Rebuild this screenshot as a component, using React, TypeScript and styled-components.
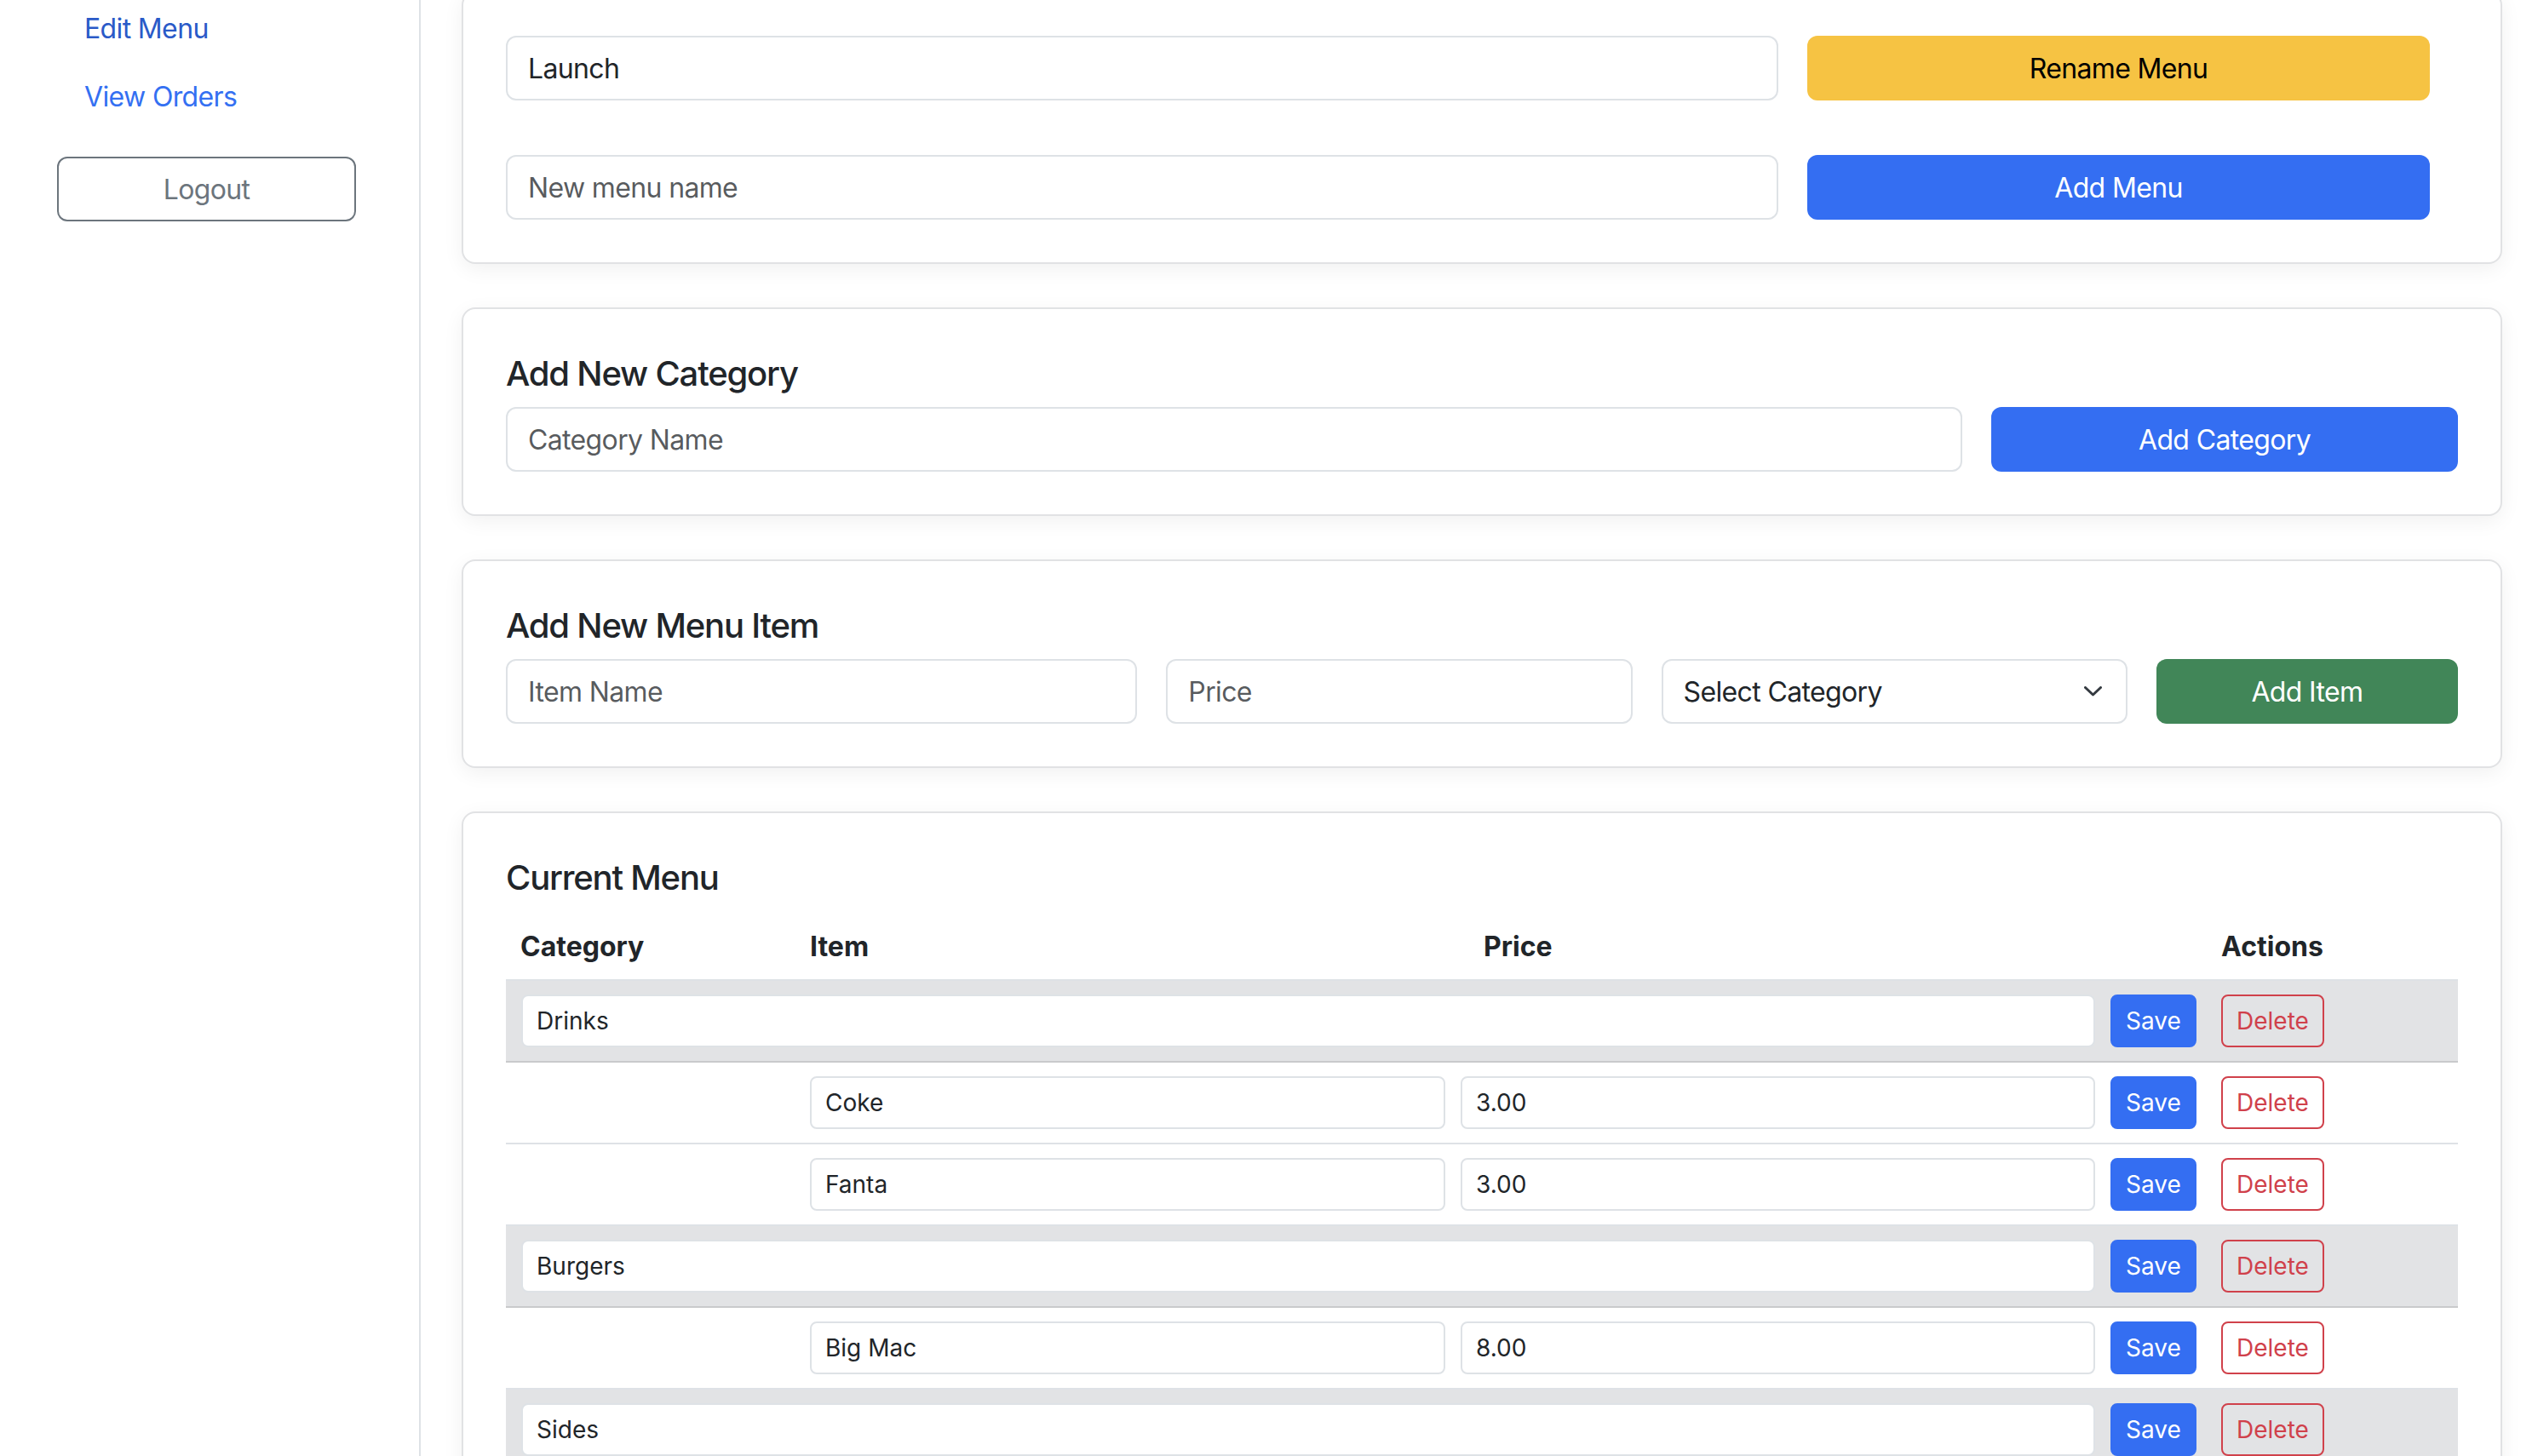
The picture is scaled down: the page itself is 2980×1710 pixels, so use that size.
import React from 'react'
import styled, { createGlobalStyle } from 'styled-components'

// body text at 32px runs a little wide in Inter, pull it in
const bodyTracking = '-0.02em'

const GlobalStyle = createGlobalStyle`
  * {
    box-sizing: border-box;
  }
  body {
    margin: 0;
    background: #ffffff;
    color: #212529;
    font-family: Inter, "Noto Sans", "Liberation Sans", sans-serif;
    font-size: 32px;
    line-height: 1.5;
    overflow: hidden;
  }
`

const Page = styled.div`
  display: flex;
  min-height: 100vh;
  margin-top: -10px;
`

const Sidebar = styled.aside`
  width: 494px;
  flex-shrink: 0;
  border-right: 2px solid #dee2e6;
  padding: 4px 0 0 67px;
  display: flex;
  flex-direction: column;
  align-items: flex-start;
`

const NavList = styled.nav`
  display: flex;
  flex-direction: column;
`

const NavLink = styled.a<{ $active?: boolean }>`
  display: block;
  padding: 16px 32px;
  font-size: 32px;
  line-height: 48px;
  letter-spacing: ${bodyTracking};
  text-decoration: none;
  color: ${(p) => (p.$active ? '#2a5ac8' : '#3470f2')};
`

const LogoutButton = styled.button`
  margin-top: 30px;
  width: 351px;
  height: 76px;
  border: 2px solid #6c757d;
  border-radius: 12px;
  background: transparent;
  color: #6c757d;
  font-family: inherit;
  font-size: 32px;
  letter-spacing: ${bodyTracking};
`

const Main = styled.main`
  flex: 1;
  display: flex;
  flex-direction: column;
  gap: 51px;
  padding: 0 42px 50px 48px;
`

const Card = styled.section`
  border: 2px solid #e1e2e4;
  border-radius: 16px;
  padding: 50px;
  background: #ffffff;
  box-shadow: 0 6px 24px rgba(0, 0, 0, 0.06);
`

const Stack = styled.div`
  display: flex;
  flex-direction: column;
  gap: 64px;
`

const FormRow = styled.div<{ $cols: string; $inset?: number }>`
  display: grid;
  grid-template-columns: ${(p) => p.$cols};
  column-gap: 34px;
  padding-right: ${(p) => p.$inset ?? 0}px;
`

const Title = styled.h2`
  margin: 2px 0 15px;
  font-size: 40px;
  line-height: 48px;
  font-weight: 500;
  letter-spacing: -0.03em;
  color: #212529;
`

const TextInput = styled.input`
  width: 100%;
  height: 76px;
  padding: 12px 24px;
  border: 2px solid #dee2e6;
  border-radius: 12px;
  font-family: inherit;
  font-size: 32px;
  letter-spacing: ${bodyTracking};
  color: #212529;
  background: #ffffff;

  &::placeholder {
    color: rgba(33, 37, 41, 0.75);
  }
`

const SelectWrap = styled.div`
  position: relative;
`

const Select = styled.select`
  width: 100%;
  height: 76px;
  padding: 12px 72px 12px 24px;
  border: 2px solid #dee2e6;
  border-radius: 12px;
  appearance: none;
  font-family: inherit;
  font-size: 32px;
  letter-spacing: ${bodyTracking};
  color: #212529;
  background: #ffffff;
`

const Chevron = styled.svg`
  position: absolute;
  right: 30px;
  top: 50%;
  transform: translateY(-50%);
  pointer-events: none;
`

const Button = styled.button<{ $tone: 'primary' | 'warning' | 'success' }>`
  height: 76px;
  border-radius: 12px;
  font-family: inherit;
  font-size: 32px;
  letter-spacing: ${bodyTracking};
  border: 2px solid transparent;
  background: ${(p) =>
    p.$tone === 'warning' ? '#f6c343' : p.$tone === 'success' ? '#418658' : '#346ef2'};
  color: ${(p) => (p.$tone === 'warning' ? '#000000' : '#ffffff')};
`

const TableGrid = styled.div`
  display: flex;
  flex-direction: column;
`

const rowColumns = '321px 746px 745px 112px 1fr'

const HeadRow = styled.div`
  display: grid;
  grid-template-columns: ${rowColumns};
  column-gap: 18px;
  padding: 18px 0 14px 18px;
  border-bottom: 2px solid #dee2e6;
`

const HeadCell = styled.div<{ $col: number; $shift?: number }>`
  grid-column: ${(p) => p.$col};
  margin-left: ${(p) => p.$shift ?? 0}px;
  font-weight: 700;
  font-size: 32px;
  line-height: 48px;
`

const BodyRow = styled.div<{ $category?: boolean }>`
  display: grid;
  grid-template-columns: ${rowColumns};
  column-gap: 18px;
  align-items: center;
  padding: 16px 0 16px 18px;
  background: ${(p) => (p.$category ? '#e2e3e5' : '#ffffff')};
  border-bottom: 2px solid ${(p) => (p.$category ? '#c9cacc' : '#dee2e6')};
`

const CellInput = styled.input<{ $span?: boolean }>`
  grid-column: ${(p) => (p.$span ? '1 / 4' : 'auto')};
  width: 100%;
  height: 62px;
  padding: 8px 16px;
  border: 2px solid #dee2e6;
  border-radius: 8px;
  font-family: inherit;
  font-size: 28px;
  color: #212529;
  background: #ffffff;
`

const SmallButton = styled.button<{ $danger?: boolean }>`
  justify-self: start;
  height: 62px;
  padding: 8px 16px;
  border-radius: 8px;
  font-family: inherit;
  font-size: 28px;
  border: 2px solid ${(p) => (p.$danger ? '#d0414b' : '#346ef2')};
  background: ${(p) => (p.$danger ? 'transparent' : '#346ef2')};
  color: ${(p) => (p.$danger ? '#d0414b' : '#ffffff')};
`

type Row =
  | { kind: 'category'; name: string }
  | { kind: 'item'; name: string; price: string }

const rows: Row[] = [
  { kind: 'category', name: 'Drinks' },
  { kind: 'item', name: 'Coke', price: '3.00' },
  { kind: 'item', name: 'Fanta', price: '3.00' },
  { kind: 'category', name: 'Burgers' },
  { kind: 'item', name: 'Big Mac', price: '8.00' },
  { kind: 'category', name: 'Sides' },
]

const App = () => {
  return (
    <>
      <GlobalStyle />
      <Page>
        <Sidebar>
          <NavList>
            <NavLink href="#" $active>Edit Menu</NavLink>
            <NavLink href="#">View Orders</NavLink>
          </NavList>
          <LogoutButton>Logout</LogoutButton>
        </Sidebar>

        <Main>
          <Card>
            <Stack>
              <FormRow $cols="1fr 731px" $inset={33}>
                <TextInput defaultValue="Launch" />
                <Button $tone="warning">Rename Menu</Button>
              </FormRow>
              <FormRow $cols="1fr 731px" $inset={33}>
                <TextInput placeholder="New menu name" />
                <Button $tone="primary">Add Menu</Button>
              </FormRow>
            </Stack>
          </Card>

          <Card>
            <Title>Add New Category</Title>
            <FormRow $cols="1fr 548px">
              <TextInput placeholder="Category Name" />
              <Button $tone="primary">Add Category</Button>
            </FormRow>
          </Card>

          <Card>
            <Title>Add New Menu Item</Title>
            <FormRow $cols="741fr 547fr 547fr 354fr">
              <TextInput placeholder="Item Name" />
              <TextInput placeholder="Price" />
              <SelectWrap>
                <Select defaultValue="">
                  <option value="">Select Category</option>
                  <option value="drinks">Drinks</option>
                  <option value="burgers">Burgers</option>
                  <option value="sides">Sides</option>
                </Select>
                <Chevron width="21" height="12" viewBox="0 0 21 12">
                  <path
                    d="M1.5 1.5 L10.5 10 L19.5 1.5"
                    fill="none"
                    stroke="#343a40"
                    strokeWidth="3"
                    strokeLinecap="round"
                    strokeLinejoin="round"
                  />
                </Chevron>
              </SelectWrap>
              <Button $tone="success">Add Item</Button>
            </FormRow>
          </Card>

          <Card>
            <Title>Current Menu</Title>
            <TableGrid>
              <HeadRow>
                <HeadCell $col={1} $shift={-1}>Category</HeadCell>
                <HeadCell $col={2}>Item</HeadCell>
                <HeadCell $col={3} $shift={27}>Price</HeadCell>
                <HeadCell $col={5}>Actions</HeadCell>
              </HeadRow>
              {rows.map((row, i) =>
                row.kind === 'category' ? (
                  <BodyRow key={i} $category>
                    <CellInput $span defaultValue={row.name} />
                    <SmallButton>Save</SmallButton>
                    <SmallButton $danger>Delete</SmallButton>
                  </BodyRow>
                ) : (
                  <BodyRow key={i}>
                    <div />
                    <CellInput defaultValue={row.name} />
                    <CellInput defaultValue={row.price} />
                    <SmallButton>Save</SmallButton>
                    <SmallButton $danger>Delete</SmallButton>
                  </BodyRow>
                )
              )}
            </TableGrid>
          </Card>
        </Main>
      </Page>
    </>
  )
}

export default App
